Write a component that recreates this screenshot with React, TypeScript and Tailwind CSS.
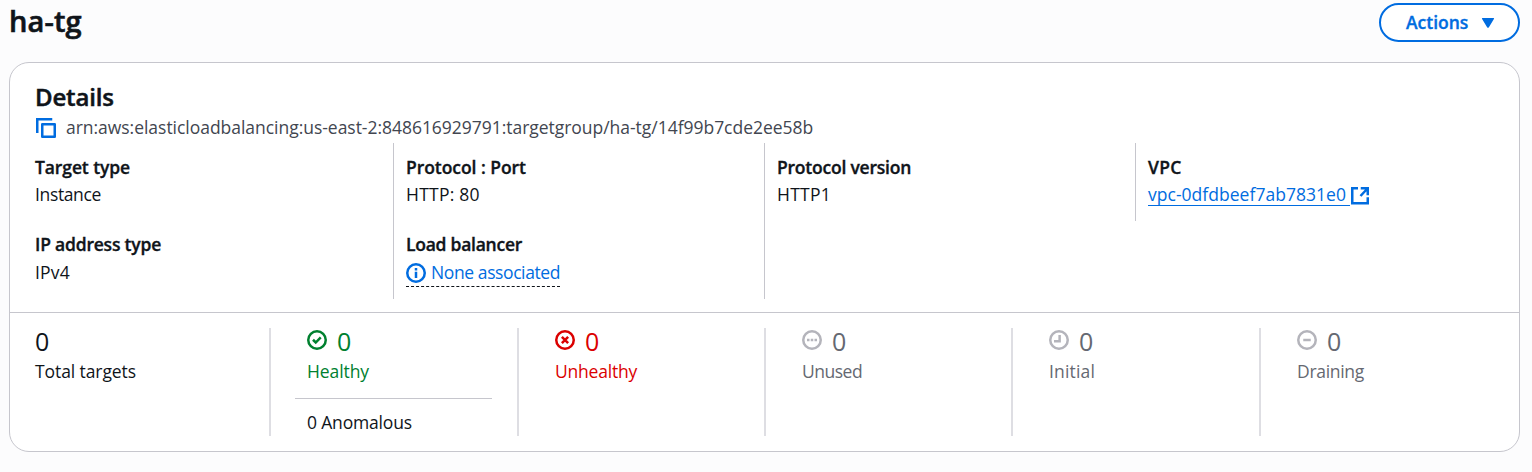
import type { ReactNode } from 'react';

function Icon({ children, className = '' }: { children: ReactNode; className?: string }) {
  return (
    <svg viewBox="0 0 16 16" fill="none" stroke="currentColor" strokeWidth="2" className={`size-5 shrink-0 ${className}`} aria-hidden="true">
      {children}
    </svg>
  );
}

const Ring = () => <circle cx="8" cy="8" r="7" />;

function Field({ label, labelClass = '', divider = true, second = false, children }: {
  label: string; labelClass?: string; divider?: boolean; second?: boolean; children: ReactNode;
}) {
  return (
    <div className={`flex h-[78px] flex-col items-start pl-3 ${second ? 'gap-[3px] pt-[11px]' : 'gap-0.5 pt-3'} ${divider ? 'border-l border-[#c6c6cd]' : 'ml-px'}`}>
      <div className={`h-[25px] whitespace-nowrap font-semibold [-webkit-text-stroke:0.35px_currentColor] ${labelClass}`}>{label}</div>
      {children}
    </div>
  );
}

function Stat({ icon, label, labelClass, color, children }: {
  icon: ReactNode; label: string; labelClass: string; color: string; children?: ReactNode;
}) {
  return (
    <div className="h-[108px] border-l-2 border-[#dedee3] pl-6 pr-[25px]">
      <div className={`flex h-7 items-start pl-3 ${color}`}>
        <span className={color === 'text-[#656871]' ? 'flex pt-0.5 text-[#b4b4bb]' : 'flex pt-0.5'}>{icon}</span>
        <span className="ml-2.5 h-7 text-[25px] leading-[26px]">0</span>
      </div>
      <div className={`h-[30px] pl-3 leading-[30px] ${color} ${labelClass}`}>{label}</div>
      {children}
    </div>
  );
}

export default function App() {
  return (
    <main className="flex h-[472px] w-[1532px] flex-col bg-[#fcfcfd] pl-[9px] pr-3 font-['Open_Sans','Noto_Sans',sans-serif] text-[17.5px] leading-[25px] text-[#0f141a]">
      <header className="flex h-[62px] items-start justify-between">
        <h1 className="text-[29px] font-semibold leading-[42px] tracking-[0.1px] [-webkit-text-stroke:0.6px_currentColor]">ha-tg</h1>
        <button className="mt-[3px] flex h-[39px] w-[141px] items-center rounded-full border-2 border-[#006ce0] bg-white pl-[25px] font-semibold text-[#006ce0] [-webkit-text-stroke:0.35px_currentColor]">
          <span>Actions</span>
          <svg viewBox="0 0 14 12" className="ml-[13px] h-3 w-3.5" fill="currentColor" aria-hidden="true">
            <path d="M1.6 1H12.4Q13.6 1 12.9 2L7.9 10.2Q7 11.5 6.1 10.2L1.1 2Q.4 1 1.6 1Z" />
          </svg>
        </button>
      </header>

      <section className="flex h-[390px] w-[1511px] flex-col rounded-[20px] border border-[#c6c6cd] bg-white">
        <div className="h-[80px] pl-[25px] pt-4">
          <h2 className="h-[35px] text-[24px] font-semibold leading-[35px] tracking-[-0.15px] [-webkit-text-stroke:0.5px_currentColor]">Details</h2>
          <div className="flex h-[26px] items-center text-[#424650]">
            <Icon className="ml-px mt-0.5 text-[#006ce0]">
              <path d="M15 5H5v10h10V5Z" strokeLinejoin="round" />
              <path d="M13 1H1v11" />
            </Icon>
            <span className="ml-2.5 tracking-[-0.03px]">arn:aws:elasticloadbalancing:us-east-2:848616929791:targetgroup/ha-tg/14f99b7cde2ee58b</span>
          </div>
        </div>

        <div className="ml-3 grid h-[169px] grid-cols-[371px_371px_371px_371px] content-start">
          <Field label="Target type" labelClass="tracking-[-0.1px]" divider={false}>
            <span className="tracking-[-0.36px]">Instance</span>
          </Field>
          <Field label="Protocol : Port" labelClass="tracking-[-0.05px]"><span className="tracking-[0.24px]">HTTP: 80</span></Field>
          <Field label="Protocol version" labelClass="tracking-[-0.22px]"><span className="tracking-[0.26px]">HTTP1</span></Field>
          <Field label="VPC" labelClass="tracking-[0.3px]">
            <a className="flex items-start text-[#006ce0]">
              <span className="h-6 w-[202px] border-b border-[#006ce0] tracking-[0.03px]">vpc-0dfdbeef7ab7831e0</span>
              <Icon className="mt-[3px]">
                <path d="M6.4 2.6H1.8v12h12.4V9.8M8.6 2.6h5.6v5.6M13.8 3 8.4 8.8" />
              </Icon>
            </a>
          </Field>
          <Field label="IP address type" labelClass="tracking-[-0.2px]" divider={false} second>
            <span className="tracking-[0.2px]">IPv4</span>
          </Field>
          <Field label="Load balancer" labelClass="tracking-[-0.25px]" second>
            <span className="flex h-[27px] w-[154px] items-start border-b border-dashed border-[#0f141a] text-[#006ce0]">
              <Icon className="mt-[3px]"><Ring /><path d="M8 4v2M8 7v5M7 8h1" /></Icon>
              <span className="ml-[5px] whitespace-nowrap tracking-[-0.4px]">None associated</span>
            </span>
          </Field>
          <div className="h-[78px] border-l border-[#c6c6cd]" />
        </div>

        <div className="grid grid-cols-[259px_248px_247px_247px_248px_1fr] border-t border-[#c6c6cd] pt-[15px]">
          <div className="pl-[25px]">
            <div className="h-7 text-[25px] leading-[26px]">0</div>
            <div className="h-[30px] leading-[30px] tracking-[-0.09px]">Total targets</div>
          </div>
          <Stat label="Healthy" labelClass="tracking-[-0.09px]" color="text-[#00802f]" icon={<Icon><Ring /><path d="m4.8 7.8 2.2 2.2 4-4.1" /></Icon>}>
            <div className="mt-3 h-px w-[197px] bg-[#c6c6cd]" />
            <div className="mt-[11px] pl-3 tracking-[-0.17px]">0 Anomalous</div>
          </Stat>
          <Stat label="Unhealthy" labelClass="tracking-[-0.21px]" color="text-[#db0000]" icon={<Icon><Ring /><path d="m5.5 5.5 5 5M10.5 5.5l-5 5" /></Icon>} />
          <Stat label="Unused" labelClass="tracking-[-0.5px]" color="text-[#656871]" icon={<Icon><Ring /><path d="M4 8h2M7 8h2M10 8h2" /></Icon>} />
          <Stat label="Initial" labelClass="tracking-[0.17px]" color="text-[#656871]" icon={<Icon><Ring /><path d="M8.5 4v5H4" /></Icon>} />
          <Stat label="Draining" labelClass="tracking-[-0.3px]" color="text-[#656871]" icon={<Icon><Ring /><path d="M5 8h6" /></Icon>} />
        </div>
      </section>
    </main>
  );
}
